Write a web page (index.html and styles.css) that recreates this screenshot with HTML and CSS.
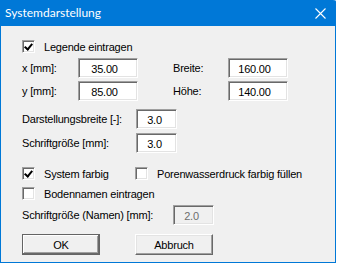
FILE: index.html
```html
<!DOCTYPE html>
<html lang="de">
<head>
    <meta charset="UTF-8">
    <title>Systemdarstellung</title>
    <link rel="stylesheet" href="styles.css">
</head>
<body>
    <div class="dialog">
        <div class="titlebar">
            <span class="title">Systemdarstellung</span>
            <svg class="close" width="11" height="11" viewBox="0 0 11 11">
                <path d="M0.5 0.5 L10.5 10.5 M10.5 0.5 L0.5 10.5" stroke="#fff" stroke-width="1.1" fill="none"/>
            </svg>
        </div>

        <div class="content">
            <div class="row check-row row-legend">
                <span class="checkbox checked"></span>
                <span class="check-label">Legende eintragen</span>
            </div>

            <div class="row field-row row-x">
                <span class="label w-xy">x [mm]:</span>
                <span class="edit w60">35.00</span>
                <span class="label w-side">Breite:</span>
                <span class="edit w60">160.00</span>
            </div>
            <div class="row field-row row-y">
                <span class="label w-xy">y [mm]:</span>
                <span class="edit w60">85.00</span>
                <span class="label w-side">Höhe:</span>
                <span class="edit w60">140.00</span>
            </div>

            <div class="row field-row row-width">
                <span class="label w-long">Darstellungsbreite [-]:</span>
                <span class="edit w41">3.0</span>
            </div>
            <div class="row field-row row-font">
                <span class="label w-long">Schriftgröße [mm]:</span>
                <span class="edit w41">3.0</span>
            </div>

            <div class="row check-row row-color">
                <div class="check-item first">
                    <span class="checkbox checked"></span>
                    <span class="check-label">System farbig</span>
                </div>
                <div class="check-item">
                    <span class="checkbox"></span>
                    <span class="check-label">Porenwasserdruck farbig füllen</span>
                </div>
            </div>
            <div class="row check-row row-names">
                <span class="checkbox"></span>
                <span class="check-label">Bodennamen eintragen</span>
            </div>
            <div class="row field-row row-namefont">
                <span class="label w-names">Schriftgröße (Namen) [mm]:</span>
                <span class="edit w41 disabled">2.0</span>
            </div>

            <div class="row buttons">
                <button class="btn default">OK</button>
                <button class="btn">Abbruch</button>
            </div>
        </div>
    </div>
</body>
</html>
```

FILE: styles.css
```css
html, body {
    margin: 0;
    padding: 0;
    background-color: white;
}

body {
    font-family: 'Liberation Sans', Arial, sans-serif;
    font-size: 11px;
    letter-spacing: -0.2px;
    color: #000;
}

.dialog {
    width: 334px;
    height: 262px;
    border: 1px solid #0078d7;
    border-top: none;
    border-top-right-radius: 2px;
    background-color: #f0f0f0;
    box-sizing: content-box;
}

.titlebar {
    height: 26px;
    margin: 0 -1px;
    background-color: #0078d7;
    display: flex;
    align-items: center;
    justify-content: space-between;
    padding: 0 10px 0 5px;
    border-top-right-radius: 3px;
}

.title {
    font-family: Lato, 'Noto Sans', sans-serif;
    font-size: 12px;
    letter-spacing: 0;
    color: white;
    margin-top: -1px;
}

.close {
    display: block;
    margin-top: 1px;
}

.content {
    padding: 0 0 0 21px;
}

.row {
    display: flex;
    align-items: center;
}

.check-row { height: 13px; }
.field-row { height: 20px; }

.row-legend { margin-top: 14px; }
.row-x { margin-top: 5px; }
.row-y { margin-top: 3px; }
.row-width { margin-top: 8px; }
.row-font { margin-top: 4px; }
.row-color { margin-top: 14px; }
.row-names { margin-top: 7px; }
.row-namefont { margin-top: 5px; }
.buttons { margin-top: 9px; gap: 35px; }

.label { white-space: nowrap; }
.w-xy { width: 56px; }
.w-side { width: 55px; margin-left: 35px; }
.w-long { width: 114px; }
.w-names { width: 151px; }

.checkbox {
    width: 13px;
    height: 13px;
    box-sizing: border-box;
    background-color: white;
    border-top: 1px solid #a0a0a0;
    border-left: 1px solid #a0a0a0;
    border-bottom: 1px solid #fff;
    border-right: 1px solid #fff;
    box-shadow: inset 1px 1px #696969, inset -1px -1px #e3e3e3;
    flex: none;
    position: relative;
}

.checkbox.checked::after {
    content: '';
    position: absolute;
    left: 2px;
    top: 1px;
    width: 3px;
    height: 6px;
    border-right: 2px solid #000;
    border-bottom: 2px solid #000;
    transform: translate(1px, 0) rotate(40deg);
    transform-origin: center;
}

.check-label {
    margin-left: 9px;
    white-space: nowrap;
}

.check-item {
    display: flex;
    align-items: center;
}

.check-item.first { width: 113px; }

.edit {
    height: 20px;
    box-sizing: border-box;
    background-color: white;
    border-top: 1px solid #a0a0a0;
    border-left: 1px solid #a0a0a0;
    border-bottom: 1px solid #fff;
    border-right: 1px solid #fff;
    box-shadow: inset 1px 1px #696969, inset -1px -1px #e3e3e3;
    display: flex;
    align-items: center;
    justify-content: center;
    padding-right: 7px;
    padding-top: 1px;
}

.w60 { width: 60px; }
.w41 { width: 41px; padding-right: 4px; }

.edit.disabled {
    background-color: #f0f0f0;
    color: #6d6d6d;
}

.btn {
    width: 78px;
    height: 21px;
    box-sizing: border-box;
    font-family: 'Liberation Sans', Arial, sans-serif;
    font-size: 11px;
    letter-spacing: -0.2px;
    color: #000;
    background-color: #f0f0f0;
    border-top: 1px solid #fff;
    border-left: 1px solid #fff;
    border-bottom: 1px solid #696969;
    border-right: 1px solid #696969;
    box-shadow: inset -1px -1px #a0a0a0, inset 1px 1px #e3e3e3;
    padding: 0;
}

.btn.default {
    border: 1px solid #646464;
    box-shadow: inset -1px -1px #696969, inset 1px 1px #fff, inset -2px -2px #a0a0a0;
}
```
